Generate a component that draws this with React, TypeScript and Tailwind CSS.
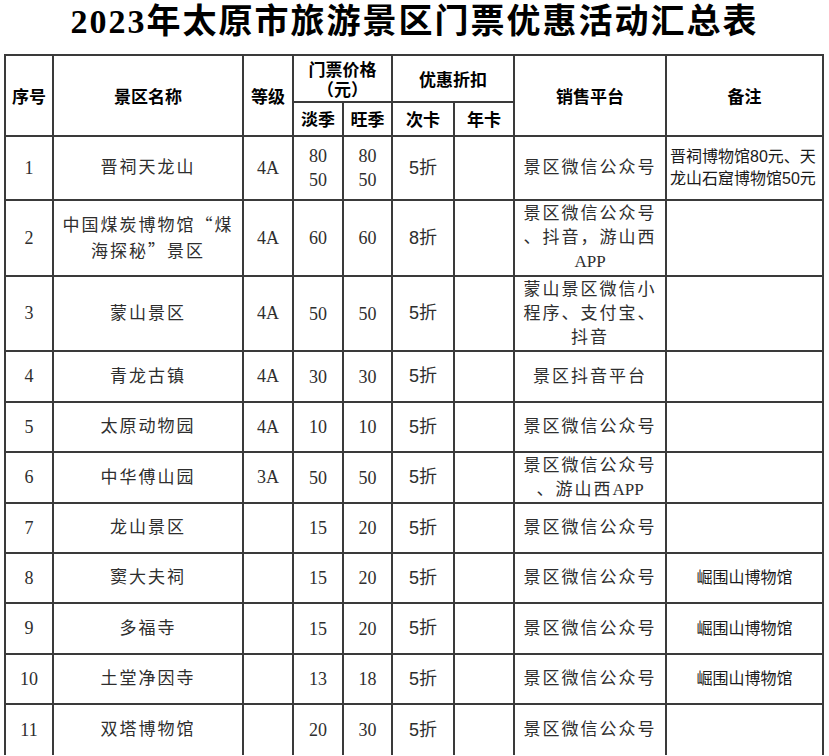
import React from "react";

type Row = {
  no: string;
  name: React.ReactNode[];
  grade: string;
  low: string[];
  high: string[];
  times: string;
  platform: React.ReactNode[];
  note?: string[];
  noteLeft?: boolean;
};

const Q = ({ c }: { c: string }) => <span className="font-['Noto_Sans_CJK_SC',sans-serif]">{c}</span>;
const App_ = () => <span className="tracking-normal">APP</span>;

const rows: Row[] = [
  {
    no: "1",
    name: ["晋祠天龙山"],
    grade: "4A",
    low: ["80", "50"],
    high: ["80", "50"],
    times: "5折",
    platform: ["景区微信公众号"],
    note: ["晋祠博物馆80元、天", "龙山石窟博物馆50元"],
    noteLeft: true,
  },
  {
    no: "2",
    name: [
      <>
        中国煤炭博物馆<Q c="“" />煤
      </>,
      <>
        海探秘<Q c="”" />景区
      </>,
    ],
    grade: "4A",
    low: ["60"],
    high: ["60"],
    times: "8折",
    platform: ["景区微信公众号", "、抖音，游山西", <App_ />],
  },
  {
    no: "3",
    name: ["蒙山景区"],
    grade: "4A",
    low: ["50"],
    high: ["50"],
    times: "5折",
    platform: ["蒙山景区微信小", "程序、支付宝、", "抖音"],
  },
  { no: "4", name: ["青龙古镇"], grade: "4A", low: ["30"], high: ["30"], times: "5折", platform: ["景区抖音平台"] },
  { no: "5", name: ["太原动物园"], grade: "4A", low: ["10"], high: ["10"], times: "5折", platform: ["景区微信公众号"] },
  {
    no: "6",
    name: ["中华傅山园"],
    grade: "3A",
    low: ["50"],
    high: ["50"],
    times: "5折",
    platform: [
      "景区微信公众号",
      <>
        、游山西<App_ />
      </>,
    ],
  },
  { no: "7", name: ["龙山景区"], grade: "", low: ["15"], high: ["20"], times: "5折", platform: ["景区微信公众号"] },
  {
    no: "8",
    name: ["窦大夫祠"],
    grade: "",
    low: ["15"],
    high: ["20"],
    times: "5折",
    platform: ["景区微信公众号"],
    note: ["崛围山博物馆"],
  },
  {
    no: "9",
    name: ["多福寺"],
    grade: "",
    low: ["15"],
    high: ["20"],
    times: "5折",
    platform: ["景区微信公众号"],
    note: ["崛围山博物馆"],
  },
  {
    no: "10",
    name: ["土堂净因寺"],
    grade: "",
    low: ["13"],
    high: ["18"],
    times: "5折",
    platform: ["景区微信公众号"],
    note: ["崛围山博物馆"],
  },
  { no: "11", name: ["双塔博物馆"], grade: "", low: ["20"], high: ["30"], times: "5折", platform: ["景区微信公众号"] },
];

function Cell({ className = "", children }: { className?: string; children?: React.ReactNode }) {
  return (
    <div className={"bg-white flex flex-col items-center justify-center text-center " + className}>{children}</div>
  );
}

function Lines({ items }: { items: React.ReactNode[] }) {
  return (
    <>
      {items.map((t, i) => (
        <div key={i} className="whitespace-nowrap">
          {t}
        </div>
      ))}
    </>
  );
}

const head = "font-['Noto_Sans_CJK_SC',sans-serif] font-bold text-[17px] text-black";

export default function App() {
  return (
    <div
      lang="zh-CN"
      className="w-[829px] h-[756px] overflow-hidden bg-white font-['Liberation_Serif','Noto_Sans_CJK_SC',serif] text-[#2e2e2e]"
    >
      <div className="h-[54px] text-center text-[34px] leading-[44px] font-bold tracking-[2px] text-black">
        2023年太原市旅游景区门票优惠活动汇总表
      </div>

      <div className="ml-[4px] w-[820px] grid grid-cols-[46px_188px_48px_48px_47px_60px_58px_150px_155px] grid-rows-[45px_32px_62px_74px_73px_49px_48px_49px_48px_48px_49px_48px_50px] gap-[2px] p-[2px] pb-0 bg-[#3a3a3a]">
        {/* header */}
        <Cell className={"row-span-2 " + head}>序号</Cell>
        <Cell className={"row-span-2 " + head}>景区名称</Cell>
        <Cell className={"row-span-2 " + head}>等级</Cell>
        <Cell className={"col-span-2 leading-[20px] " + head}>
          <div>门票价格</div>
          <div>（元）</div>
        </Cell>
        <Cell className={"col-span-2 " + head}>优惠折扣</Cell>
        <Cell className={"row-span-2 " + head}>销售平台</Cell>
        <Cell className={"row-span-2 " + head}>备注</Cell>
        <Cell className={head}>淡季</Cell>
        <Cell className={head}>旺季</Cell>
        <Cell className={head}>次卡</Cell>
        <Cell className={head}>年卡</Cell>

        {/* body */}
        {rows.map((r) => (
          <React.Fragment key={r.no}>
            <Cell className="text-[18px]">{r.no}</Cell>
            <Cell className="text-[17px] leading-[24px] tracking-[2px]">
              <Lines items={r.name} />
            </Cell>
            <Cell className="text-[18px]">{r.grade}</Cell>
            <Cell className="text-[18px] leading-[24px]">
              <Lines items={r.low} />
            </Cell>
            <Cell className="text-[18px] leading-[24px]">
              <Lines items={r.high} />
            </Cell>
            <Cell className="text-[18px] font-['Liberation_Sans','Noto_Sans_CJK_SC',sans-serif]">{r.times}</Cell>
            <Cell />
            <Cell className="text-[17px] leading-[24px] tracking-[2px]">
              <Lines items={r.platform} />
            </Cell>
            {r.note ? (
              r.noteLeft ? (
                <div className="bg-white flex flex-col justify-center pl-[3px] text-left text-[16px] leading-[22px] text-[#1a1a1a] font-['Liberation_Sans','Noto_Sans_CJK_SC',sans-serif]">
                  <Lines items={r.note} />
                </div>
              ) : (
                <Cell className="text-[16px] text-[#1a1a1a] font-['Liberation_Sans','Noto_Sans_CJK_SC',sans-serif]">
                  <Lines items={r.note} />
                </Cell>
              )
            ) : (
              <Cell />
            )}
          </React.Fragment>
        ))}
      </div>
    </div>
  );
}
